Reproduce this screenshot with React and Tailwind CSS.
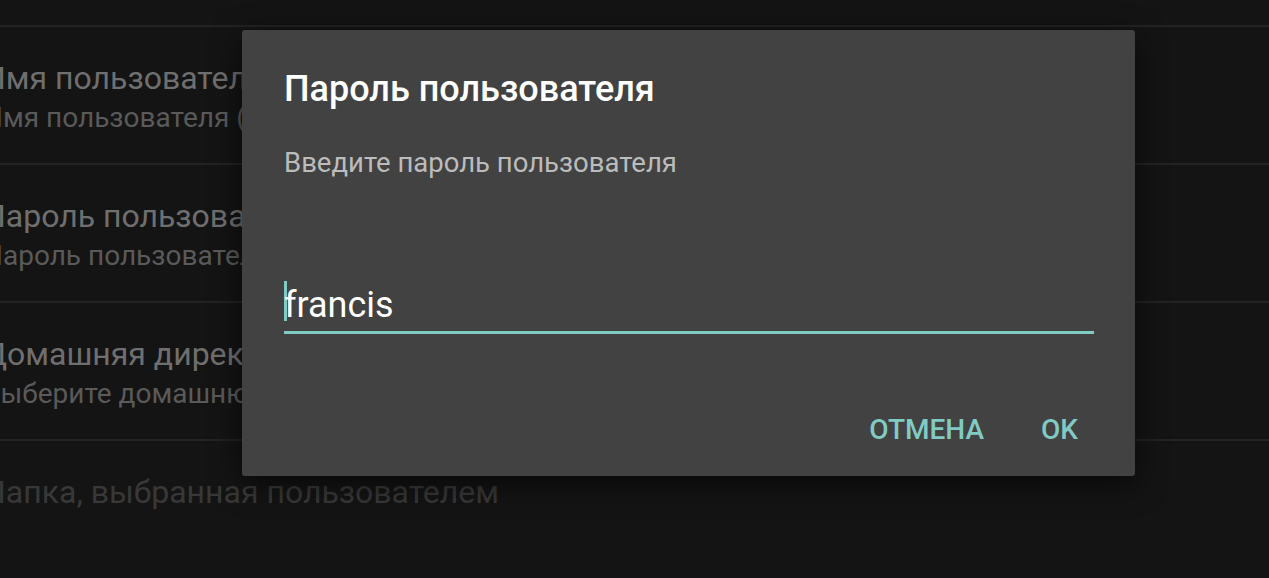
const items = [
  { title: "Имя пользователя", subtitle: "Имя пользователя (логин)" },
  { title: "Пароль пользователя", subtitle: "Пароль пользователя" },
  { title: "Домашняя директория", subtitle: "Выберите домашнюю директорию" },
];

const App = () => {
  return (
    <div
      className="relative w-[1269px] h-[578px] overflow-hidden bg-[#141414]"
      style={{ fontFamily: "Roboto, 'Noto Sans', sans-serif" }}
    >
      <div className="h-[25px]" />
      <div className="flex flex-col">
        {items.map((item) => (
          <div
            key={item.title}
            className="h-[138px] border-t-2 border-[#232323] flex flex-col pt-[31px] whitespace-nowrap"
          >
            <div className="-ml-[17px] text-[32px] leading-[40px] text-[#6f6f6f]">{item.title}</div>
            <div className="-ml-[17px] text-[28px] leading-[40px] text-[#5a5a5a]">{item.subtitle}</div>
          </div>
        ))}
        <div className="h-[120px] border-t-2 border-[#232323] pt-[31px] whitespace-nowrap">
          <div className="-ml-[17px] text-[32px] leading-[40px] text-[#383838]">
            Папка, выбранная пользователем
          </div>
        </div>
      </div>

      {/* dialog */}
      <div className="absolute left-[242px] top-[30px] w-[893px] h-[446px] bg-[#424242] rounded-[3px] shadow-[0_8px_30px_rgba(0,0,0,0.6)] flex flex-col px-[42px]">
        <div className="pt-[37px] text-[36px] leading-[44px] font-medium text-white">
          Пароль пользователя
        </div>
        <div className="mt-[34px] text-[27.5px] leading-[36px] text-[#bcbcbc]">
          Введите пароль пользователя
        </div>
        <div className="mt-[100px] mr-[-1px] border-b-[3px] border-[#80cbc4] flex items-start h-[53px]">
          <span className="w-[3px] h-[40px] bg-[#80cbc4] -mr-[3px]" />
          <span className="text-[36px] leading-[48px] text-white">francis</span>
        </div>
        <div className="mt-auto mb-[28px] flex justify-end gap-[57px] pr-[15px]">
          <span className="text-[28px] leading-[36px] font-medium text-[#80cbc4]">ОТМЕНА</span>
          <span className="text-[28px] leading-[36px] font-medium text-[#80cbc4]">OK</span>
        </div>
      </div>
    </div>
  );
};

export default App;
